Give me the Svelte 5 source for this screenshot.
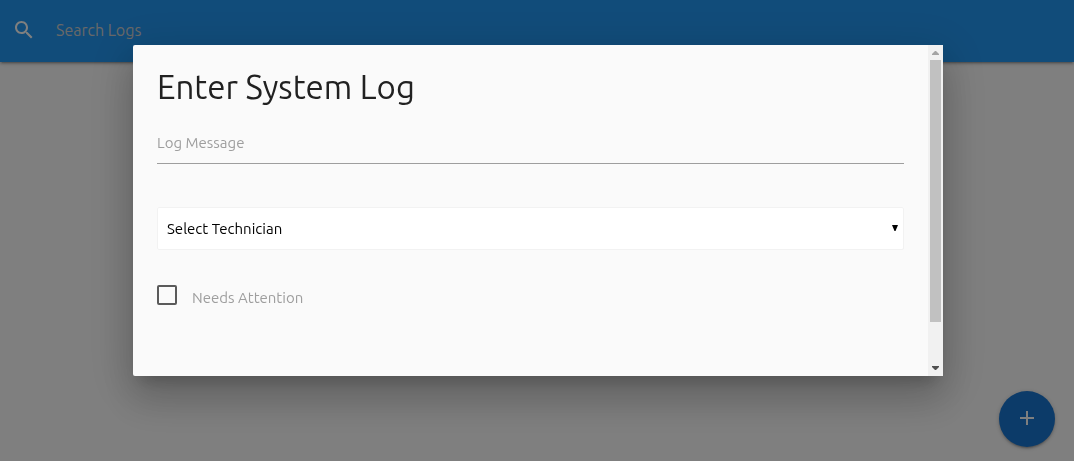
<script>
  let query = $state('');
  let message = $state('');
  let technician = $state('');
  let attention = $state(false);
</script>

<div class="page">
  <header class="bar">
    <label class="search-label" for="search" aria-label="Search">
      <svg viewBox="0 0 24 24" width="24" height="24" aria-hidden="true">
        <path d="M15.5 14h-.79l-.28-.27C15.41 12.59 16 11.11 16 9.5 16 5.91 13.09 3 9.5 3S3 5.91 3 9.5 5.91 16 9.5 16c1.61 0 3.09-.59 4.23-1.57l.27.28v.79l5 4.99L20.49 19l-4.99-5zm-6 0C7.01 14 5 11.99 5 9.5S7.01 5 9.5 5 14 7.01 14 9.5 11.99 14 9.5 14z" />
      </svg>
    </label>
    <input id="search" type="search" placeholder="Search Logs" bind:value={query} />
  </header>

  <button class="fab" type="button" aria-label="Add log">
    <svg viewBox="0 0 24 24" width="24" height="24" aria-hidden="true">
      <path d="M19 13h-6v6h-2v-6H5v-2h6V5h2v6h6v2z" />
    </svg>
  </button>
</div>

<div class="overlay">
  <div class="modal" role="dialog" aria-modal="true" aria-labelledby="title">
    <form class="content">
      <h1 id="title">Enter System Log</h1>
      <input class="message" type="text" placeholder="Log Message" aria-label="Log Message" bind:value={message} />
      <div class="select">
        <select aria-label="Select Technician" bind:value={technician}>
          <option value="" disabled>Select Technician</option>
        </select>
        <svg viewBox="0 0 6 6" width="6" height="6" aria-hidden="true"><path d="M0 0h6L3.500 6h-1z" /></svg>
      </div>
      <label class="check">
        <input type="checkbox" bind:checked={attention} />
        <span>Needs Attention</span>
      </label>
    </form>
    <div class="scrollbar" aria-hidden="true">
      <svg class="up" viewBox="0 0 15 15" width="15" height="15"><path d="M4 10h7v-1L8 6H7L4 9z" /></svg>
      <div class="track"><div class="thumb"></div></div>
      <svg class="down" viewBox="0 0 15 15" width="15" height="15"><path d="M4 5h7v1L8 9H7L4 6z" /></svg>
    </div>
  </div>
</div>

<style>
  :global(body) {
    margin: 0;
    background: #fff;
    font-family: Ubuntu, "Noto Sans", sans-serif;
  }

  * {
    box-sizing: border-box;
  }

  input,
  select,
  button {
    font-family: inherit;
    margin: 0;
  }

  .page {
    min-height: 100vh;
  }

  .bar {
    display: flex;
    align-items: center;
    gap: 20px;
    height: 62px;
    padding: 0 12px 2px;
    background: #2399f4;
    box-shadow: 0 2px 2px 0 rgba(0, 0, 0, 0.14), 0 3px 1px -2px rgba(0, 0, 0, 0.12), 0 1px 5px 0 rgba(0, 0, 0, 0.2);
  }

  .search-label {
    display: flex;
    fill: #fff;
  }

  .bar input {
    flex: 1;
    min-width: 0;
    height: 60px;
    padding: 0;
    border: 0;
    outline: 0;
    appearance: none;
    background: transparent;
    color: #fff;
    font-size: 16px;
  }

  .bar input::placeholder {
    color: #d1d1d1;
  }

  .fab {
    position: fixed;
    right: 19px;
    bottom: 14px;
    display: grid;
    place-items: center;
    width: 56px;
    height: 56px;
    padding: 0 0 2px;
    border: 0;
    border-radius: 50%;
    background: #1976d2;
    fill: #fff;
    box-shadow: 0 2px 2px 0 rgba(0, 0, 0, 0.14), 0 3px 1px -2px rgba(0, 0, 0, 0.12), 0 1px 5px 0 rgba(0, 0, 0, 0.2);
  }

  .overlay {
    position: fixed;
    inset: 0;
    display: flex;
    padding: 45px 131px 85px 133px;
    background: rgba(0, 0, 0, 0.5);
  }

  .modal {
    display: flex;
    flex: 1;
    min-width: 0;
    overflow: hidden;
    border-radius: 2px 0 0 2px;
    background: #fafafa;
    box-shadow: 0 24px 38px 3px rgba(0, 0, 0, 0.14), 0 9px 46px 8px rgba(0, 0, 0, 0.12), 0 11px 15px -7px rgba(0, 0, 0, 0.2);
  }

  .content {
    flex: 1;
    min-width: 0;
    padding: 24px;
  }

  h1 {
    margin: 0;
    color: #212121;
    font-size: 33px;
    font-weight: 400;
    line-height: 36px;
  }

  .message {
    display: block;
    width: 100%;
    height: 44px;
    margin-top: 15px;
    padding: 2px 0 0;
    border: 0;
    border-bottom: 1px solid #9e9e9e;
    border-radius: 0;
    outline: 0;
    background: transparent;
    font-size: 15px;
  }

  .message::placeholder {
    color: #9e9e9e;
  }

  .select {
    display: grid;
    align-items: center;
    margin-top: 43px;
  }

  .select > * {
    grid-area: 1 / 1;
  }

  select {
    width: 100%;
    height: 43px;
    padding: 0 9px;
    border: 1px solid #f2f2f2;
    border-radius: 2px;
    outline: 0;
    appearance: none;
    background: #fff;
    color: #000;
    font-size: 15px;
    opacity: 1;
  }

  .select svg {
    justify-self: end;
    margin: 0 6px 2px 0;
    pointer-events: none;
  }

  .check {
    display: flex;
    width: fit-content;
    gap: 15px;
    margin-top: 35px;
    color: #9e9e9e;
    font-size: 15px;
    line-height: 26px;
  }

  .check input {
    width: 20px;
    height: 20px;
    border: 2px solid #5a5a5a;
    border-radius: 2px;
    appearance: none;
  }

  .check input:checked {
    background: #5a5a5a;
  }

  .scrollbar {
    display: flex;
    flex-direction: column;
    width: 15px;
    background: #f1f1f1;
  }

  .up {
    fill: #a3a3a3;
  }

  .down {
    fill: #505050;
  }

  .track {
    flex: 1;
    padding: 0 2px;
  }

  .thumb {
    height: 87%;
    background: #c1c1c1;
  }
</style>
